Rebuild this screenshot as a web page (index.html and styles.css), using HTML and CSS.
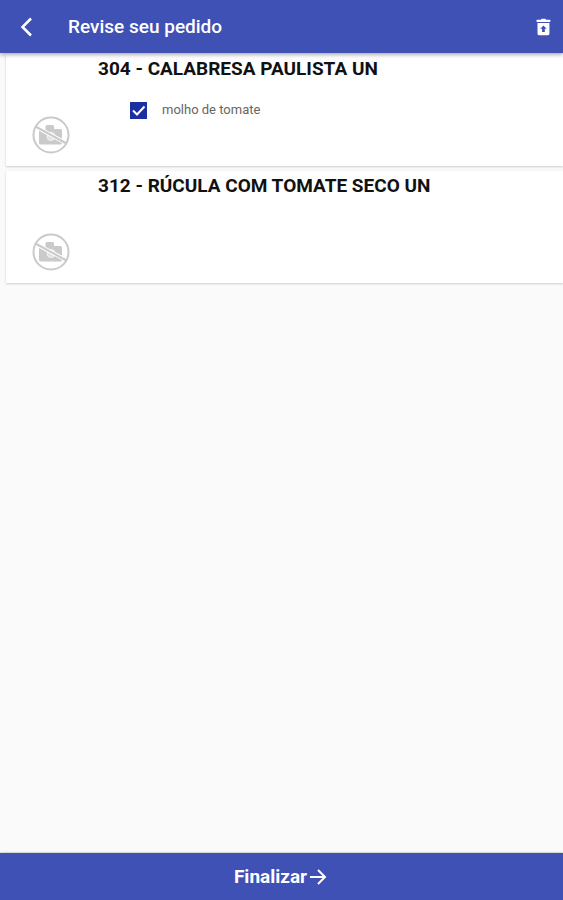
FILE: index.html
```html
<!DOCTYPE html>
<html lang="pt-BR">
<head>
<meta charset="utf-8">
<meta name="viewport" content="width=device-width, initial-scale=1">
<title>Revise seu pedido</title>
<link rel="stylesheet" href="styles.css">
</head>
<body>
<svg class="sprite" aria-hidden="true">
  <symbol id="no-photo" viewBox="0 0 38 38">
    <path fill="#cacaca" d="M7 14h6.500V10.500q0-1.500 1.500-1.500h5.500q1.500 0 1.500 1.500V13h6.500q1.500 0 1.500 1.500V27q0 1.500-1.500 1.500h-20Q7 28.500 7 27z"/>
    <circle cx="19" cy="20.500" r="4" fill="#e2e2e2" stroke="#f4f4f4"/>
    <path d="M4 11l30 16" stroke="#fff" stroke-width="4"/>
    <circle cx="19" cy="19" r="17.500" fill="none" stroke="#cacaca" stroke-width="2"/>
    <path d="M3.500 10.500l31 17" stroke="#cacaca" stroke-width="2"/>
  </symbol>
</svg>
<header class="bar">
  <button class="icon-button" type="button" aria-label="Voltar">
    <svg width="24" height="24" viewBox="0 0 24 24" fill="none" stroke="currentColor" stroke-width="2.500"><path d="M16 3.500L7.500 12l8.500 8.500"/></svg>
  </button>
  <h1 class="bar-title">Revise seu pedido</h1>
  <button class="icon-button" type="button" aria-label="Limpar pedido">
    <svg width="22" height="22" viewBox="0 0 24 24" fill="currentColor"><path fill-rule="evenodd" d="M15.500 4l-1-1h-4l-1 1H5v2.500h15V4zM6 7.500V19a2 2 0 0 0 2 2h9a2 2 0 0 0 2-2V7.500zm6.500 2.800l3.500 3.700h-2v3.500h-3V14H9z"/></svg>
  </button>
</header>
<main class="items">
  <article class="item">
    <svg class="photo" role="img" aria-label="Sem foto"><use href="#no-photo"/></svg>
    <div class="details">
      <h2 class="item-title">304 - CALABRESA PAULISTA UN</h2>
      <label class="option">
        <span class="check">
          <input class="check-input" type="checkbox" checked>
          <svg class="check-mark" viewBox="0 0 17 17" aria-hidden="true"><path d="M3 8.500l4 4 7.500-8" fill="none" stroke="#fff" stroke-width="2"/></svg>
        </span>
        molho de tomate
      </label>
    </div>
  </article>
  <article class="item">
    <svg class="photo" role="img" aria-label="Sem foto"><use href="#no-photo"/></svg>
    <div class="details">
      <h2 class="item-title">312 - RÚCULA COM TOMATE SECO UN</h2>
    </div>
  </article>
</main>
<button class="finish" type="button">
  Finalizar
  <svg width="18" height="18" viewBox="0 0 18 18" fill="none" stroke="currentColor" stroke-width="2"><path d="M1 9h15M9 2l7 7-7 7"/></svg>
</button>
</body>
</html>
```
FILE: styles.css
```css
* {
  box-sizing: border-box;
}

body {
  margin: 0;
  min-height: 100vh;
  display: flex;
  flex-direction: column;
  background: #fafafa;
  color: #111;
  font-family: Roboto, sans-serif;
}

h1,
h2 {
  margin: 0;
}

button {
  border: 0;
  font-family: inherit;
  color: #fff;
  cursor: pointer;
}

.sprite {
  position: absolute;
  width: 0;
  height: 0;
}

.bar {
  position: relative;
  display: flex;
  align-items: center;
  height: 53px;
  padding: 1px 9px 0 15px;
  background: #3f51b5;
  color: #fff;
  box-shadow: 0 2px 4px rgba(0, 0, 0, 0.3);
}

.bar-title {
  flex: 1;
  padding-left: 29px;
  font-size: 19px;
  line-height: 24px;
  font-weight: 500;
}

.icon-button {
  display: flex;
  padding: 0;
  background: none;
}

.items {
  flex: 1;
  display: flex;
  flex-direction: column;
  gap: 5px;
  padding: 1px 0 0 6px;
}

.item {
  display: flex;
  min-height: 112px;
  background: #fff;
  box-shadow: 0 1px 2px rgba(0, 0, 0, 0.18);
}

.photo {
  align-self: flex-end;
  width: 38px;
  height: 38px;
  margin: 0 27px 12px 26px;
}

.details {
  flex: 1;
  padding: 3px 0 0 1px;
}

.item-title {
  font-size: 19px;
  line-height: 24px;
  font-weight: 700;
}

.option {
  display: flex;
  align-items: center;
  gap: 15px;
  margin: 20px 0 0 32px;
  font-size: 13px;
  line-height: 18px;
  color: #666;
}

.check {
  display: grid;
}

.check-input,
.check-mark {
  grid-area: 1 / 1;
  width: 17px;
  height: 17px;
  margin: 0;
}

.check-input {
  appearance: none;
  border: 2px solid #1a2fa0;
}

.check-input:checked {
  background: #1a2fa0;
}

.check-mark {
  z-index: 1;
  visibility: hidden;
  pointer-events: none;
}

.check-input:checked + .check-mark {
  visibility: visible;
}

.finish {
  display: flex;
  align-items: center;
  justify-content: center;
  gap: 2px;
  height: 47px;
  padding: 1px 2px 0 0;
  background: #3f51b5;
  box-shadow: 0 0 2px rgba(0, 0, 0, 0.4);
  font-size: 19px;
  line-height: 24px;
  font-weight: 700;
}
```
